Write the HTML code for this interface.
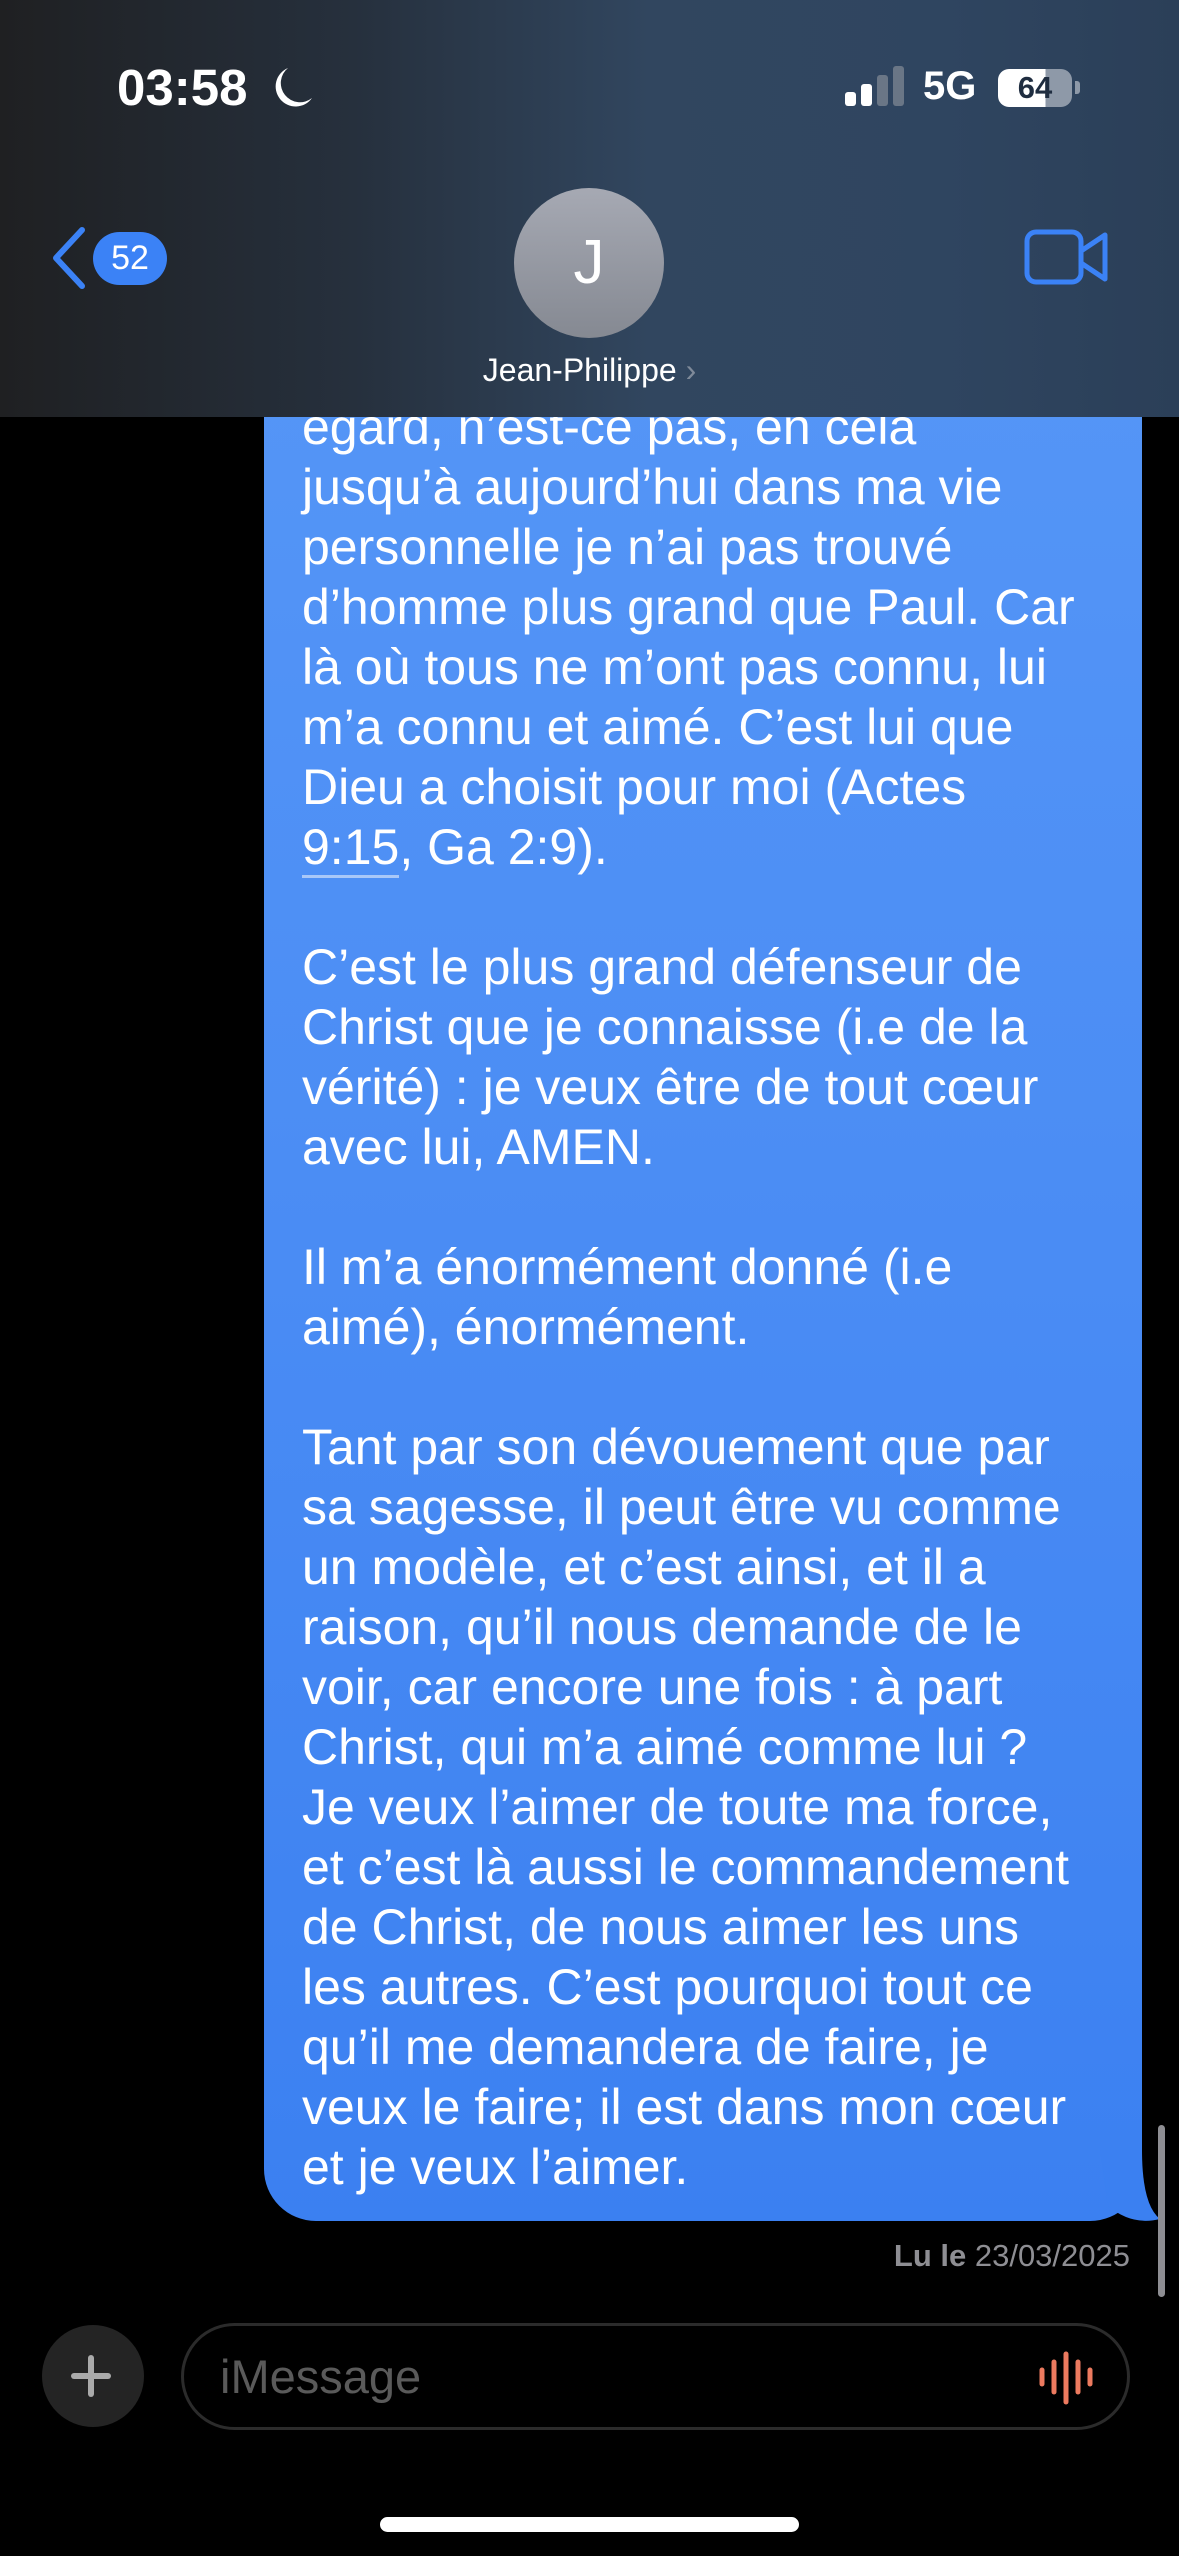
<!DOCTYPE html>
<html><head><meta charset="utf-8"><style>
*{margin:0;padding:0;box-sizing:border-box}
body{width:1179px;height:2556px;background:#000;position:relative;overflow:hidden;font-family:"Liberation Sans",sans-serif;color:#fff}
.hdr{position:absolute;left:0;top:0;width:1179px;height:417px;background:linear-gradient(90deg,#1f2022 0%,#26303d 30%,#31465f 55%,#2f4560 80%,#2b3f58 100%);z-index:2}
.bubble{position:absolute;left:264px;top:300px;width:878px;height:1921px;border-radius:52px;background:linear-gradient(180deg,#5596f7 0%,#4a8cf4 50%,#3b80f1 100%)}
.txt{position:absolute;left:302px;top:397px;font-size:50px;line-height:60px;letter-spacing:0px;z-index:1}
.txt div{height:60px;white-space:pre}
</style></head><body>
<div class="bubble"></div>
<svg style="position:absolute;left:0;top:0" width="1179" height="2556"><path d="M1100 2150 L1142 2150 Q1142 2205 1160 2219 Q1132 2226 1108 2206 Z" fill="#3b80f1"/></svg>
<div class="txt"><div>égard, n’est-ce pas, en cela</div><div>jusqu’à aujourd’hui dans ma vie</div><div>personnelle je n’ai pas trouvé</div><div>d’homme plus grand que Paul. Car</div><div>là où tous ne m’ont pas connu, lui</div><div>m’a connu et aimé. C’est lui que</div><div>Dieu a choisit pour moi (Actes</div><div><span style="border-bottom:3px solid #a9c8f8">9:15</span>, Ga 2:9).</div><div></div><div>C’est le plus grand défenseur de</div><div>Christ que je connaisse (i.e de la</div><div>vérité) : je veux être de tout cœur</div><div>avec lui, AMEN.</div><div></div><div>Il m’a énormément donné (i.e</div><div>aimé), énormément.</div><div></div><div>Tant par son dévouement que par</div><div>sa sagesse, il peut être vu comme</div><div>un modèle, et c’est ainsi, et il a</div><div>raison, qu’il nous demande de le</div><div>voir, car encore une fois : à part</div><div>Christ, qui m’a aimé comme lui ?</div><div>Je veux l’aimer de toute ma force,</div><div>et c’est là aussi le commandement</div><div>de Christ, de nous aimer les uns</div><div>les autres. C’est pourquoi tout ce</div><div>qu’il me demandera de faire, je</div><div>veux le faire; il est dans mon cœur</div><div>et je veux l’aimer.</div></div>
<div class="hdr">
 <div style="position:absolute;left:117px;top:58px;font-size:51px;font-weight:bold;letter-spacing:0px">03:58</div>
 <svg style="position:absolute;left:272px;top:66px" width="42" height="44" viewBox="0 0 42 44"><path d="M16 2 A20 20 0 1 0 40 32 A17 17 0 0 1 16 2 Z" fill="#fff"/></svg>
 <div style="position:absolute;left:845px;top:92px;width:11px;height:14px;border-radius:3px;background:#fff"></div>
 <div style="position:absolute;left:861px;top:84px;width:11px;height:22px;border-radius:3px;background:#fff"></div>
 <div style="position:absolute;left:877px;top:75px;width:11px;height:31px;border-radius:3px;background:#6a7686"></div>
 <div style="position:absolute;left:893px;top:66px;width:11px;height:40px;border-radius:3px;background:#6a7686"></div>
 <div style="position:absolute;left:923px;top:64px;font-size:40px;font-weight:bold">5G</div>
 <div style="position:absolute;left:998px;top:69px;width:74px;height:38px;border-radius:11px;background:linear-gradient(90deg,#fff 0,#fff 64%,#8e99a8 64%);color:#1f2d40;font-size:31px;font-weight:bold;text-align:center;line-height:38px">64</div>
 <div style="position:absolute;left:1075px;top:81px;width:5px;height:13px;border-radius:0 3px 3px 0;background:#8e99a8"></div>
 <svg style="position:absolute;left:48px;top:226px" width="42" height="64" viewBox="0 0 42 64"><path d="M34 4 L8 32 L34 60" fill="none" stroke="#3b82f6" stroke-width="6" stroke-linecap="round" stroke-linejoin="round"/></svg>
 <div style="position:absolute;left:93px;top:232px;width:74px;height:53px;border-radius:27px;background:#3b82f6;font-size:34px;text-align:center;line-height:53px">52</div>
 <div style="position:absolute;left:514px;top:188px;width:150px;height:150px;border-radius:50%;background:linear-gradient(180deg,#a6a9b3,#858992);font-size:62px;text-align:center;line-height:150px">J</div>
 <div style="position:absolute;left:0;width:1179px;top:352px;text-align:center;font-size:32px;color:#fff">Jean-Philippe <span style="color:#7f8a99">›</span></div>
 <svg style="position:absolute;left:1024px;top:229px" width="86" height="56" viewBox="0 0 86 56"><rect x="3" y="3" width="54" height="50" rx="9" fill="none" stroke="#3b82f6" stroke-width="5"/><path d="M57 22 L81 6 L81 50 L57 34" fill="none" stroke="#3b82f6" stroke-width="5" stroke-linejoin="round"/></svg>
</div>
<div style="position:absolute;left:1158px;top:2125px;width:7px;height:172px;border-radius:4px;background:#8e8e93"></div>
<div style="position:absolute;right:49px;top:2238px;font-size:31px;color:#8e8e93"><b>Lu le</b> 23/03/2025</div>
<div style="position:absolute;left:42px;top:2325px;width:102px;height:102px;border-radius:50%;background:#242424"></div>
<div style="position:absolute;left:71px;top:2373px;width:40px;height:6px;background:#aaa;border-radius:3px"></div>
<div style="position:absolute;left:88px;top:2355px;width:6px;height:42px;background:#aaa;border-radius:3px"></div>
<div style="position:absolute;left:181px;top:2323px;width:949px;height:107px;border:3px solid #2b2b2b;border-radius:54px"></div>
<div style="position:absolute;left:220px;top:2349px;font-size:47px;color:#5a5a5a">iMessage</div>
<svg style="position:absolute;left:1036px;top:2350px" width="60" height="56" viewBox="0 0 60 56"><g stroke="#ec7a5f" stroke-width="5" stroke-linecap="round"><line x1="6" y1="20" x2="6" y2="34"/><line x1="18" y1="12" x2="18" y2="42"/><line x1="30" y1="4" x2="30" y2="52"/><line x1="42" y1="12" x2="42" y2="42"/><line x1="54" y1="20" x2="54" y2="34"/></g></svg>
<div style="position:absolute;left:380px;top:2517px;width:419px;height:15px;border-radius:8px;background:#fff"></div>
</body></html>
